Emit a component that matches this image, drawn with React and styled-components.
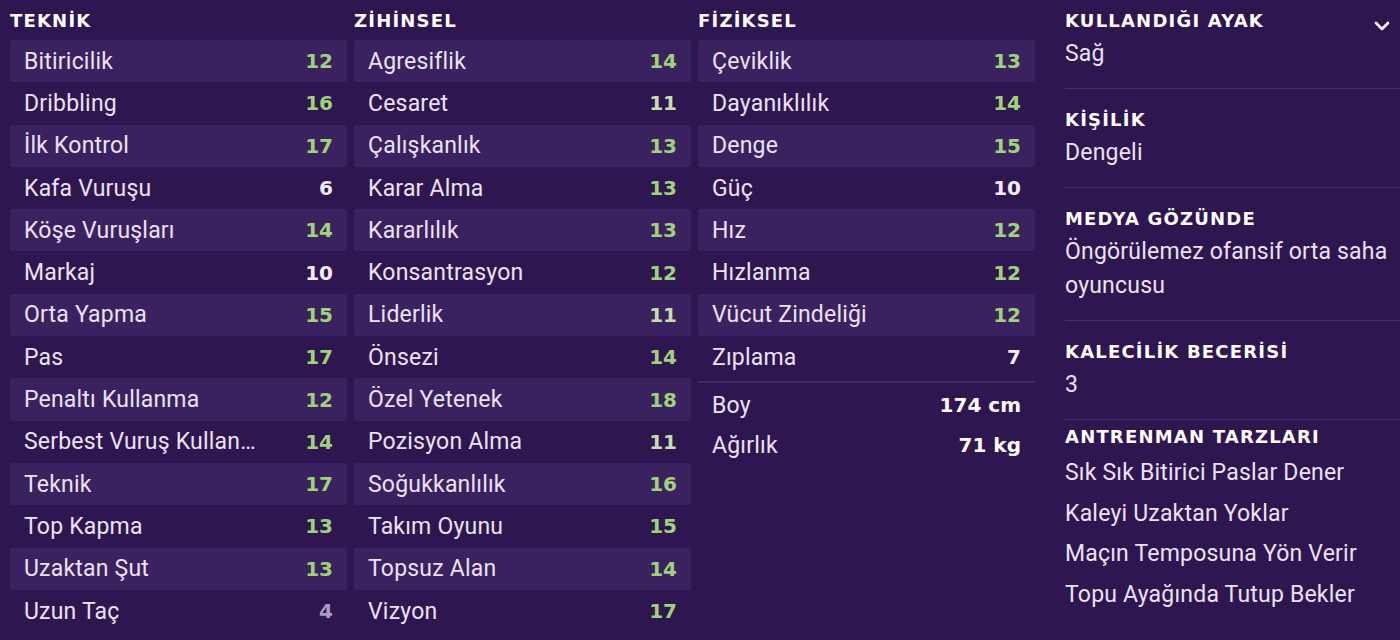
import styled, { createGlobalStyle } from "styled-components";

const GlobalStyle = createGlobalStyle`
  html, body {
    margin: 0;
    padding: 0;
    background: #2e1650;
  }
  body {
    font-family: "Roboto", "Noto Sans", sans-serif;
    color: #ebe2f4;
  }
`;

const Page = styled.div`
  display: grid;
  grid-template-columns: 337px 337px 337px 1fr;
  column-gap: 7px;
  padding-left: 10px;
  width: 1400px;
  height: 640px;
  box-sizing: border-box;
  overflow: hidden;
`;

const Column = styled.section`
  display: flex;
  flex-direction: column;
`;

const Heading = styled.h2`
  margin: 0;
  height: 40px;
  line-height: 42px;
  font-family: "DejaVu Sans", sans-serif;
  font-weight: 700;
  font-size: 18px;
  letter-spacing: 1.2px;
  color: #ffffff;
`;

const Row = styled.div`
  display: flex;
  align-items: center;
  justify-content: space-between;
  height: ${(p) => (p.$compact ? "40px" : "42.3px")};
  padding: 0 14px;
  background: ${(p) => (p.$striped ? "#3a2160" : "transparent")};
  border-radius: 2px;
`;

const Label = styled.span`
  font-size: 23px;
  letter-spacing: 0.2px;
  color: #ebe2f4;
  white-space: nowrap;
  overflow: hidden;
  text-overflow: ellipsis;
  max-width: ${(p) => p.$max || "none"};
`;

const Value = styled.span`
  font-family: "DejaVu Sans", sans-serif;
  font-size: 20px;
  font-weight: 700;
  color: ${(p) => p.$color};
`;

const Divider = styled.div`
  height: 2px;
  background: #412a66;
  margin: 3px 0 2px;
`;

const Side = styled.aside`
  display: flex;
  flex-direction: column;
  padding-left: 23px;
`;

const Block = styled.div`
  position: relative;
  padding: ${(p) => p.$top}px 0 ${(p) => p.$bottom}px;
  border-bottom: ${(p) => (p.$last ? "none" : "1px solid #44306a")};
`;

const BlockTitle = styled.div`
  height: 32px;
  line-height: 32px;
  font-family: "DejaVu Sans", sans-serif;
  font-weight: 700;
  font-size: 18px;
  letter-spacing: 1.2px;
  color: #ffffff;
`;

const BlockText = styled.div`
  font-size: 23px;
  letter-spacing: 0.2px;
  line-height: ${(p) => p.$lh || 33}px;
  color: #ebe2f4;
`;

const Toggle = styled.svg`
  position: absolute;
  top: 21px;
  right: 10px;
`;

const teknik = [
  ["Bitiricilik", 12],
  ["Dribbling", 16],
  ["İlk Kontrol", 17],
  ["Kafa Vuruşu", 6],
  ["Köşe Vuruşları", 14],
  ["Markaj", 10],
  ["Orta Yapma", 15],
  ["Pas", 17],
  ["Penaltı Kullanma", 12],
  ["Serbest Vuruş Kullanma", 14],
  ["Teknik", 17],
  ["Top Kapma", 13],
  ["Uzaktan Şut", 13],
  ["Uzun Taç", 4],
];

const zihinsel = [
  ["Agresiflik", 14],
  ["Cesaret", 11],
  ["Çalışkanlık", 13],
  ["Karar Alma", 13],
  ["Kararlılık", 13],
  ["Konsantrasyon", 12],
  ["Liderlik", 11],
  ["Önsezi", 14],
  ["Özel Yetenek", 18],
  ["Pozisyon Alma", 11],
  ["Soğukkanlılık", 16],
  ["Takım Oyunu", 15],
  ["Topsuz Alan", 14],
  ["Vizyon", 17],
];

const fiziksel = [
  ["Çeviklik", 13],
  ["Dayanıklılık", 14],
  ["Denge", 15],
  ["Güç", 10],
  ["Hız", 12],
  ["Hızlanma", 12],
  ["Vücut Zindeliği", 12],
  ["Zıplama", 7],
];

const styles = [
  "Sık Sık Bitirici Paslar Dener",
  "Kaleyi Uzaktan Yoklar",
  "Maçın Temposuna Yön Verir",
  "Topu Ayağında Tutup Bekler",
];

function ratingColor(n) {
  if (n <= 5) return "#a99cc4";
  if (n <= 10) return "#f2eef8";
  if (n === 11) return "#c3e0a8";
  return "#9fd374";
}

function AttributeList({ items }) {
  return items.map(([name, value], i) => (
    <Row key={name} $striped={i % 2 === 0}>
      <Label $max="232px">{name}</Label>
      <Value $color={ratingColor(value)}>{value}</Value>
    </Row>
  ));
}

export default function App() {
  return (
    <>
      <GlobalStyle />
      <Page>
        <Column>
          <Heading>TEKNİK</Heading>
          <AttributeList items={teknik} />
        </Column>
        <Column>
          <Heading>ZİHİNSEL</Heading>
          <AttributeList items={zihinsel} />
        </Column>
        <Column>
          <Heading>FİZİKSEL</Heading>
          <AttributeList items={fiziksel} />
          <Divider />
          <Row $compact>
            <Label>Boy</Label>
            <Value $color="#ffffff">174 cm</Value>
          </Row>
          <Row $compact>
            <Label>Ağırlık</Label>
            <Value $color="#ffffff">71 kg</Value>
          </Row>
        </Column>
        <Side>
          <Block $top={5} $bottom={18}>
            <BlockTitle>KULLANDIĞI AYAK</BlockTitle>
            <BlockText>Sağ</BlockText>
            <Toggle width="16" height="10" viewBox="0 0 16 10">
              <path
                d="M2 2 L8 8 L14 2"
                fill="none"
                stroke="#ffffff"
                strokeWidth="2.6"
                strokeLinecap="round"
                strokeLinejoin="round"
              />
            </Toggle>
          </Block>
          <Block $top={15} $bottom={18}>
            <BlockTitle>KİŞİLİK</BlockTitle>
            <BlockText>Dengeli</BlockText>
          </Block>
          <Block $top={15} $bottom={17}>
            <BlockTitle>MEDYA GÖZÜNDE</BlockTitle>
            <BlockText $lh={34}>Öngörülemez ofansif orta saha oyuncusu</BlockText>
          </Block>
          <Block $top={15} $bottom={18}>
            <BlockTitle>KALECİLİK BECERİSİ</BlockTitle>
            <BlockText>3</BlockText>
          </Block>
          <Block $top={1} $bottom={0} $last>
            <BlockTitle>ANTRENMAN TARZLARI</BlockTitle>
            {styles.map((s) => (
              <BlockText key={s} $lh={40.7}>
                {s}
              </BlockText>
            ))}
          </Block>
        </Side>
      </Page>
    </>
  );
}
